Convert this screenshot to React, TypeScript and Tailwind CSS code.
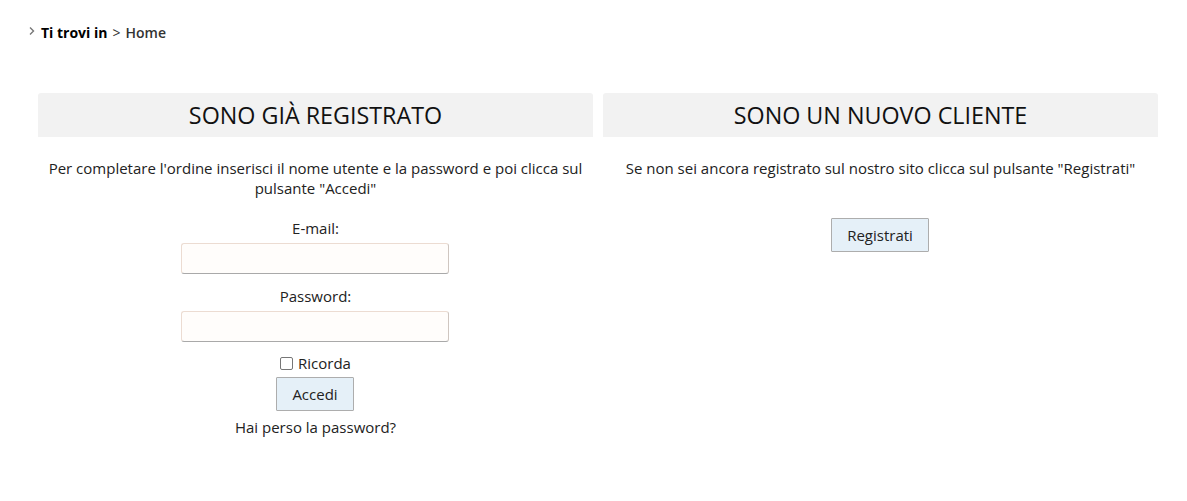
import { useState } from 'react';

export default function App() {
  const [email, setEmail] = useState('');
  const [password, setPassword] = useState('');
  const [remember, setRemember] = useState(false);

  return (
    <div className="min-h-[501px] bg-white text-[15px] text-[#222] font-['Open_Sans',sans-serif]">
      <div className="flex items-center gap-[5px] pl-[28px] pt-[23px] text-[14px] leading-[20px]">
        <svg width="8" height="10" viewBox="0 0 8 10" className="mt-[-4px]">
          <path d="M2 1.5 L5.5 5 L2 8.5" stroke="#777" strokeWidth="1.4" fill="none" />
        </svg>
        <span className="font-bold text-black">Ti trovi in</span>
        <span className="text-[#333]">&gt;</span>
        <span className="font-semibold text-[#333]">Home</span>
      </div>

      <div className="mt-[50px] grid grid-cols-2 gap-[10px] pl-[38px] pr-[29px]">
        <section className="flex flex-col items-center">
          <h2 className="w-full h-[44px] flex items-center justify-center bg-[#f2f2f2] rounded-t-[3px] text-[23.3px] text-[#111] font-normal">
            SONO GIÀ REGISTRATO
          </h2>
          <p className="mt-[21px] px-[8px] text-center leading-[20px]">
            Per completare l'ordine inserisci il nome utente e la password e poi clicca sul pulsante "Accedi"
          </p>
          <label className="mt-[20px] leading-[20px]">E-mail:</label>
          <input
            type="text"
            value={email}
            onChange={e => setEmail(e.target.value)}
            className="mt-[5px] mr-[1px] w-[268px] h-[31px] px-2 rounded-[3px] border border-[#ecdcd2] border-b-[#a9a9a9] border-r-[#cfc6c0] bg-[#fffdfb] outline-none"
          />
          <label className="mt-[12px] leading-[20px]">Password:</label>
          <input
            type="password"
            value={password}
            onChange={e => setPassword(e.target.value)}
            className="mt-[5px] mr-[1px] w-[268px] h-[31px] px-2 rounded-[3px] border border-[#ecdcd2] border-b-[#a9a9a9] border-r-[#cfc6c0] bg-[#fffdfb] outline-none"
          />
          <label className="mt-[11px] flex items-center gap-[5px] leading-[20px] cursor-pointer">
            <span
              onClick={() => setRemember(!remember)}
              className="w-[13px] h-[13px] border border-[#767676] rounded-[2px] bg-white flex items-center justify-center text-[10px] leading-none"
            >
              {remember ? '✓' : ''}
            </span>
            Ricorda
          </label>
          <button className="mt-[4px] mr-[1px] w-[78px] h-[34px] bg-[#e5f0f8] border border-[#adadad] rounded-[1px] text-[15px]">
            Accedi
          </button>
          <a className="mt-[6px] leading-[20px] cursor-pointer">Hai perso la password?</a>
        </section>

        <section className="flex flex-col items-center">
          <h2 className="w-full h-[44px] flex items-center justify-center bg-[#f2f2f2] rounded-t-[3px] text-[23.3px] text-[#111] font-normal">
            SONO UN NUOVO CLIENTE
          </h2>
          <p className="mt-[21px] text-center leading-[20px]">
            Se non sei ancora registrato sul nostro sito clicca sul pulsante "Registrati"
          </p>
          <button className="mt-[40px] mr-[1px] w-[98px] h-[34px] bg-[#e5f0f8] border border-[#adadad] rounded-[1px] text-[15px]">
            Registrati
          </button>
        </section>
      </div>
    </div>
  );
}
